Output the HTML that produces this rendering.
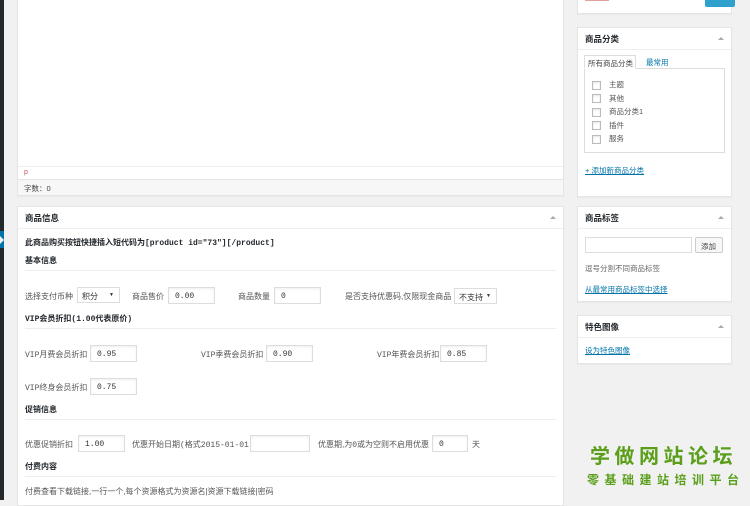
<!DOCTYPE html>
<html><head><meta charset="utf-8"><style>
*{margin:0;padding:0;box-sizing:border-box}
body{width:750px;height:500px;overflow:hidden;background:#f1f1f1;position:relative;font-family:"Liberation Sans","Noto Sans CJK SC",sans-serif;font-size:8px;color:#444}
.abs{position:absolute}
.box{position:absolute;background:#fff;border:1px solid #e5e5e5;box-shadow:0 1px 1px rgba(0,0,0,.04)}
.hd{height:22px;border-bottom:1px solid #eee;font-weight:bold;font-size:8.5px;color:#23282d;padding:5px 7px 0 7px;position:relative}
.hd:after{content:"";position:absolute;right:7px;top:9px;border-left:3px solid transparent;border-right:3px solid transparent;border-bottom:3px solid #aaa}
.mono{font-family:"Liberation Mono","Noto Sans CJK SC",monospace}
.in{position:absolute;height:17px;border:1px solid #ddd;box-shadow:inset 0 1px 2px rgba(0,0,0,.07);background:#fff;font-family:"Liberation Mono",monospace;font-size:8px;color:#333;padding:4px 0 0 6px}
.lbl{position:absolute;font-size:8px;color:#555}
.sec{position:absolute;left:7px;right:7px;font-weight:bold;color:#23282d;font-size:8px;border-bottom:1px solid #eee;height:16px}
a{color:#0073aa;text-decoration:underline}
.cb{display:inline-block;width:9px;height:9px;border:1px solid #bbb;vertical-align:middle;margin-right:8px;box-shadow:inset 0 1px 2px rgba(0,0,0,.1)}
.sel{position:absolute;height:16px;border:1px solid #ddd;background:#fff;font-size:8px;padding:3px 0 0 4px;color:#333}
.sel:after{content:"▼";position:absolute;right:5px;top:4px;font-size:5px}
</style></head><body>
<div class="abs" style="left:0;top:0;width:4px;height:500px;background:#23282d"></div>
<div class="abs" style="left:0;top:231px;width:4px;height:17px;background:#0073aa"></div>
<div class="abs" style="left:0;top:236px;width:0;height:0;border-left:4px solid #f1f1f1;border-top:4px solid transparent;border-bottom:4px solid transparent"></div>

<div class="box" style="left:17px;top:-2px;width:547px;height:198px">
 <div class="abs" style="left:0;top:167px;width:545px;border-top:1px solid #eee;height:12px;padding:2px 0 0 6px;color:#c55;font-size:7px">p</div>
 <div class="abs" style="left:0;top:180px;width:545px;height:16px;background:#f7f7f7;border-top:1px solid #e5e5e5;padding:3px 0 0 6px;font-size:7.5px">字数：0</div>
</div>

<div class="box" style="left:17px;top:206px;width:547px;height:300px">
 <div class="hd">商品信息</div>
 <div class="abs mono" style="left:7px;top:30px;font-weight:bold;color:#23282d;font-size:8px">此商品购买按钮快捷插入短代码为[product id="73"][/product]</div>
 <div class="sec" style="top:48px">基本信息</div>
 <div class="lbl" style="left:7px;top:84px">选择支付币种</div>
 <div class="sel" style="left:59px;top:80px;width:43px">积分</div>
 <div class="lbl" style="left:114px;top:84px">商品售价</div>
 <div class="in" style="left:150px;top:80px;width:47px">0.00</div>
 <div class="lbl" style="left:220px;top:84px">商品数量</div>
 <div class="in" style="left:256px;top:80px;width:47px">0</div>
 <div class="lbl" style="left:327px;top:84px">是否支持优惠码,仅限现金商品</div>
 <div class="sel" style="left:436px;top:81px;width:43px">不支持</div>
 <div class="sec mono" style="top:106px">VIP会员折扣(1.00代表原价)</div>
 <div class="lbl" style="left:7px;top:142px"><span class="mono">VIP</span>月费会员折扣</div>
 <div class="in" style="left:72px;top:138px;width:47px">0.95</div>
 <div class="lbl" style="left:183px;top:142px"><span class="mono">VIP</span>季费会员折扣</div>
 <div class="in" style="left:248px;top:138px;width:47px">0.90</div>
 <div class="lbl" style="left:359px;top:142px"><span class="mono">VIP</span>年费会员折扣</div>
 <div class="in" style="left:422px;top:138px;width:47px">0.85</div>
 <div class="lbl" style="left:7px;top:175px"><span class="mono">VIP</span>终身会员折扣</div>
 <div class="in" style="left:72px;top:171px;width:47px">0.75</div>
 <div class="sec" style="top:197px">促销信息</div>
 <div class="lbl" style="left:7px;top:232px">优惠促销折扣</div>
 <div class="in" style="left:60px;top:228px;width:47px">1.00</div>
 <div class="lbl" style="left:114px;top:232px">优惠开始日期<span class="mono">(格式2015-01-01)</span></div>
 <div class="in" style="left:232px;top:228px;width:60px"></div>
 <div class="lbl" style="left:300px;top:232px">优惠期,为<span class="mono">0</span>或为空则不启用优惠</div>
 <div class="in" style="left:414px;top:228px;width:36px">0</div>
 <div class="lbl" style="left:454px;top:232px">天</div>
 <div class="sec" style="top:254px">付费内容</div>
 <div class="lbl" style="left:7px;top:279px">付费查看下载链接,一行一个,每个资源格式为资源名|资源下载链接|密码</div>
</div>

<div class="box" style="left:577px;top:-2px;width:155px;height:16px">
 <div class="abs" style="left:7px;top:-3px;width:24px;height:5px;background:#e0a0a0"></div>
 <div class="abs" style="left:127px;top:0;width:30px;height:8px;background:#2ea2cc;border-radius:0 0 2px 2px"></div>
</div>

<div class="box" style="left:577px;top:27px;width:155px;height:170px">
 <div class="hd">商品分类</div>
 <div class="abs" style="left:6px;top:27px;width:52px;height:14px;border:1px solid #ddd;border-bottom:1px solid #fff;background:#fff;padding:2px 0 0 3px;font-size:7.5px;z-index:2">所有商品分类</div>
 <div class="abs" style="left:68px;top:29px;color:#0073aa;font-size:7.5px">最常用</div>
 <div class="abs" style="left:6px;top:40px;width:141px;height:85px;border:1px solid #ddd;padding:9px 0 0 7px;line-height:13.5px;font-size:7.5px;color:#555">
  <div><span class="cb"></span>主题</div><div><span class="cb"></span>其他</div><div><span class="cb"></span>商品分类1</div><div><span class="cb"></span>插件</div><div><span class="cb"></span>服务</div>
 </div>
 <div class="abs" style="left:7px;top:137px;font-size:7.5px"><a>+ 添加新商品分类</a></div>
</div>

<div class="box" style="left:577px;top:206px;width:155px;height:96px">
 <div class="hd">商品标签</div>
 <div class="abs" style="left:7px;top:30px;width:107px;height:16px;border:1px solid #ddd"></div>
 <div class="abs" style="left:117px;top:30px;width:28px;height:16px;border:1px solid #ccc;background:#f7f7f7;border-radius:2px;font-size:7.5px;padding:3px 0 0 5px">添加</div>
 <div class="abs" style="left:7px;top:56px;font-size:7.5px;color:#666">逗号分割不同商品标签</div>
 <div class="abs" style="left:7px;top:77px;font-size:7.5px"><a>从最常用商品标签中选择</a></div>
</div>

<div class="box" style="left:577px;top:315px;width:155px;height:49px">
 <div class="hd">特色图像</div>
 <div class="abs" style="left:7px;top:29px;font-size:7.5px"><a>设为特色图像</a></div>
</div>

<div class="abs" style="left:590px;top:443px;font-size:20px;line-height:24px;font-weight:bold;color:#5a9e1a;letter-spacing:4.5px;font-family:'Noto Sans CJK SC',sans-serif">学做网站论坛</div>
<div class="abs" style="left:587px;top:472px;font-size:12px;line-height:15px;font-weight:bold;color:#5a9e1a;letter-spacing:5.5px;font-family:'Noto Sans CJK SC',sans-serif">零基础建站培训平台</div>
</body></html>
